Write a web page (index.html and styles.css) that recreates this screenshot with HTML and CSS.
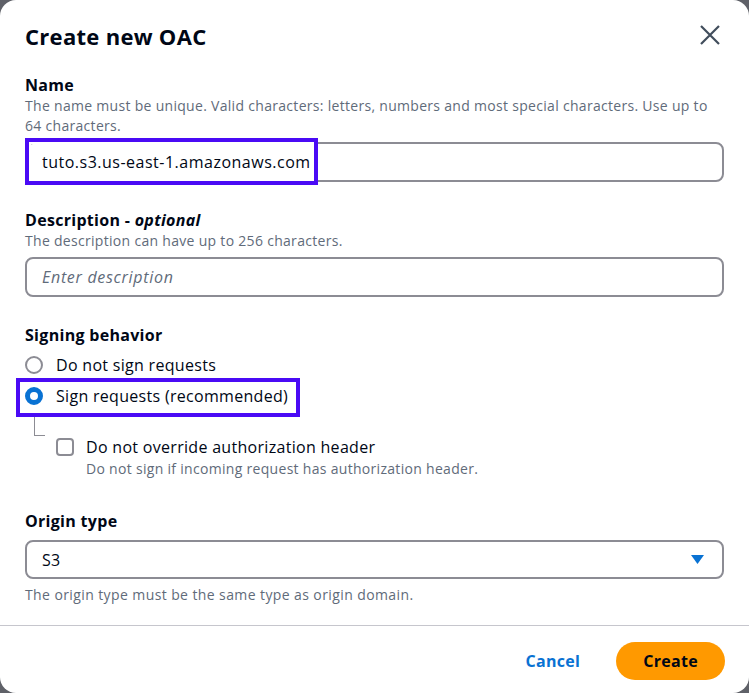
FILE: index.html
```html
<!DOCTYPE html>
<html>
<head>
  <meta charset="UTF-8">
  <title>Create new OAC</title>
  <link rel="stylesheet" href="styles.css">
</head>
<body>
  <div class="modal">
    <div class="modal-header">
      <h2 class="modal-title">Create new OAC</h2>
      <button class="close-btn" aria-label="Close">
        <svg width="22" height="22" viewBox="0 0 22 22">
          <path d="M2 2 L20 20 M20 2 L2 20" stroke="#414d5c" stroke-width="2.2" fill="none"/>
        </svg>
      </button>
    </div>

    <div class="modal-body">
      <!-- Name -->
      <div class="field field-name">
        <div class="label">Name</div>
        <div class="desc">The name must be unique. Valid characters: letters, numbers and most special characters. Use up to 64 characters.</div>
        <div class="control">
          <input class="text-input" type="text" value="tuto.s3.us-east-1.amazonaws.com">
          <span class="mark mark-name"></span>
        </div>
      </div>

      <!-- Description -->
      <div class="field field-desc">
        <div class="label">Description - <i>optional</i></div>
        <div class="desc">The description can have up to 256 characters.</div>
        <div class="control">
          <input class="text-input" type="text" placeholder="Enter description">
        </div>
      </div>

      <!-- Signing -->
      <div class="field field-sign">
        <div class="label">Signing behavior</div>
        <div class="radio-group">
          <div class="radio-row">
            <span class="radio"></span>
            <span class="radio-text">Do not sign requests</span>
          </div>
          <div class="radio-row">
            <span class="radio radio-checked"></span>
            <span class="radio-text">Sign requests (recommended)</span>
            <span class="mark mark-radio"></span>
          </div>
        </div>
        <div class="connector"></div>
        <div class="check-row">
          <span class="checkbox"></span>
          <div>
            <div class="check-text">Do not override authorization header</div>
            <div class="desc check-desc">Do not sign if incoming request has authorization header.</div>
          </div>
        </div>
      </div>

      <!-- Origin type -->
      <div class="field field-origin">
        <div class="label">Origin type</div>
        <div class="select">
          <span>S3</span>
          <svg width="13" height="9" viewBox="0 0 13 9"><path d="M0 0 H13 L6.5 9 Z" fill="#0972d3"/></svg>
        </div>
        <div class="desc desc-after">The origin type must be the same type as origin domain.</div>
      </div>
    </div>

    <div class="modal-footer">
      <button class="btn-link">Cancel</button>
      <button class="btn-primary">Create</button>
    </div>
  </div>
</body>
</html>
```

FILE: styles.css
```css
/* page */
body {
  margin: 0;
  background-color: #5f6168;
  font-family: "Open Sans", "Noto Sans", sans-serif;
  letter-spacing: 0.3px;
  color: #000716;
}

.modal {
  height: 693px;
  background-color: #fff;
  border-radius: 16px;
  display: flex;
  flex-direction: column;
  overflow: hidden;
}

/* header */
.modal-header {
  display: flex;
  justify-content: space-between;
  align-items: flex-start;
  padding: 21px 28px 0 25px;
}
.modal-title {
  margin: 0;
  font-size: 22px;
  line-height: 30px;
  font-weight: 700;
}
.close-btn {
  margin-top: 3px;
  padding: 0;
  border: none;
  background: none;
  width: 22px;
  height: 22px;
  cursor: pointer;
}
.close-btn svg {
  display: block;
}

/* body */
.modal-body {
  flex: 1;
  padding: 0 25px;
}
.field {
  position: relative;
}
.field-name {
  margin-top: 23px;
}
.field-desc {
  margin-top: 27px;
}
.field-sign {
  margin-top: 27px;
}
.field-origin {
  margin-top: 31px;
}
.label {
  font-size: 16px;
  line-height: 22px;
  font-weight: 700;
}
.desc {
  font-size: 14px;
  line-height: 20px;
  color: #5f6b7a;
}
.desc-after {
  margin-top: 6px;
  letter-spacing: 0.4px;
}
.control {
  position: relative;
  margin-top: 6px;
}
.text-input {
  box-sizing: border-box;
  display: block;
  width: 100%;
  height: 40px;
  padding: 0 15px;
  border: 2px solid #8c8c94;
  border-radius: 8px;
  font-family: "Open Sans", "Noto Sans", sans-serif;
  font-size: 16px;
  letter-spacing: 0.5px;
  color: #000716;
  background: #fff;
  outline: none;
}
.text-input::placeholder {
  color: #5f6b7a;
  font-style: italic;
  letter-spacing: 0.7px;
}

/* annotation boxes */
.mark {
  position: absolute;
  border: 4px solid #4a0af5;
  pointer-events: none;
}
.mark-name {
  left: 0;
  top: -4px;
  width: 285px;
  height: 39px;
  box-shadow: inset 0 0 0 2px #fff;
}
.mark-radio {
  left: -9px;
  top: -3px;
  width: 276px;
  height: 31px;
}

/* radios */
.radio-group {
  margin-top: 4px;
}
.radio-row {
  position: relative;
  display: flex;
  align-items: center;
  height: 22px;
  padding: 4px 0;
}
.radio-row + .radio-row {
  margin-top: 1px;
}
.radio {
  box-sizing: border-box;
  width: 18px;
  height: 18px;
  border: 2px solid #8c8c94;
  border-radius: 50%;
  margin-right: 13px;
  flex: none;
}
.radio-checked {
  border: 5.5px solid #0972d3;
}
.radio-text {
  font-size: 16px;
  line-height: 22px;
}

.connector {
  margin: 6px 0 0 9px;
  width: 10px;
  height: 18px;
  border-left: 1px solid #8c8c94;
  border-bottom: 1px solid #8c8c94;
}

/* checkbox */
.check-row {
  display: flex;
  align-items: flex-start;
  margin-left: 31px;
}
.checkbox {
  box-sizing: border-box;
  width: 18px;
  height: 18px;
  margin-top: 2px;
  margin-right: 12px;
  border: 2px solid #8c8c94;
  border-radius: 4px;
  flex: none;
}
.check-text {
  font-size: 16px;
  line-height: 22px;
}
.check-desc {
  margin-top: 1px;
}

/* select */
.select {
  box-sizing: border-box;
  margin-top: 8px;
  height: 39px;
  padding: 0 18px 0 15px;
  border: 2px solid #8c8c94;
  border-radius: 8px;
  display: flex;
  align-items: center;
  justify-content: space-between;
  font-size: 16px;
}
.select svg {
  display: block;
}

/* footer */
.modal-footer {
  border-top: 1px solid #c6c6cd;
  padding: 16px 24px 13px 25px;
  display: flex;
  justify-content: flex-end;
  align-items: center;
}
.btn-link,
.btn-primary {
  font-family: "Open Sans", "Noto Sans", sans-serif;
  font-size: 16px;
  font-weight: 700;
  letter-spacing: 0.3px;
  border: none;
  cursor: pointer;
}
.btn-link {
  background: none;
  color: #0972d3;
  padding: 0;
  margin-right: 36px;
}
.btn-primary {
  background-color: #ff9900;
  color: #000716;
  height: 38px;
  padding: 0 27px;
  border-radius: 20px;
}
```
